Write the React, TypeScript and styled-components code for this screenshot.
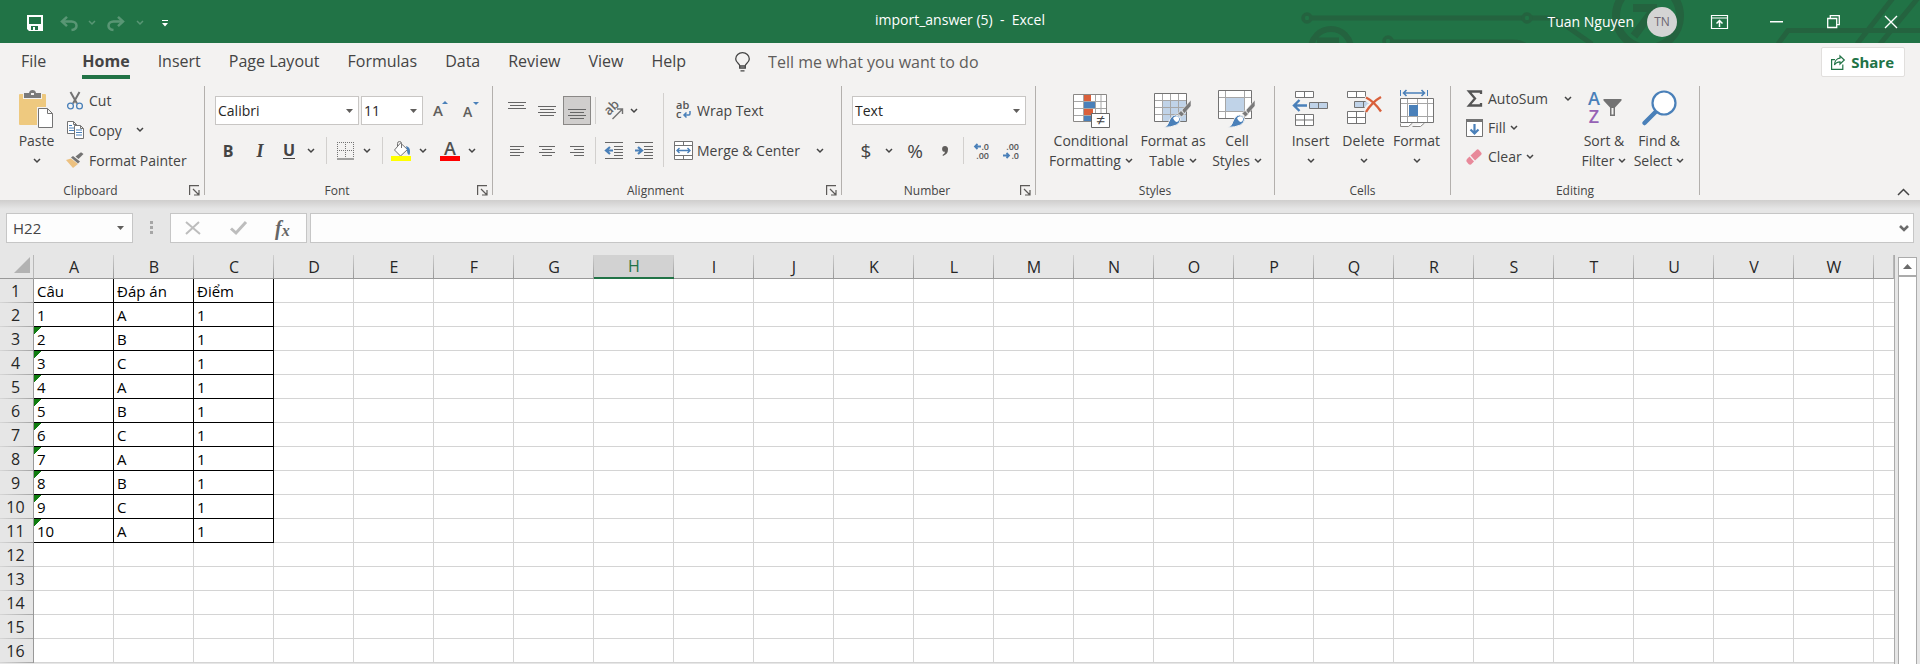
import React from 'react';
import styled, { createGlobalStyle, css } from 'styled-components';

const green = '#217346';
const ink = '#444444';
const grey = '#737373';
const blue = '#4a80b9';
const pale = '#c0d3e8';

const GlobalStyle = createGlobalStyle`
  *, *::before, *::after { box-sizing: border-box; }
  html, body { margin: 0; padding: 0; }
  body, button, input, select { font-family: 'Open Sans', 'Noto Sans', sans-serif; }
  button { margin: 0; padding: 0; border: 0; background: transparent; color: inherit; cursor: pointer; }
  svg { display: block; flex: none; overflow: visible; }
  svg text { font-family: 'Open Sans', 'Noto Sans', sans-serif; }
`;

const Page = styled.div`
  display: flex;
  flex-direction: column;
  height: 100vh;
  overflow: hidden;
  background: #e6e6e6;
  color: ${ink};
  font-size: 14px;
`;

/* ---------- title bar ---------- */

const TitleBar = styled.header`
  position: relative;
  display: grid;
  grid-template-columns: 1fr auto 1fr;
  flex: none;
  height: 43px;
  background: ${green};
  color: #ffffff;
`;

const Circuit = styled.svg`
  position: absolute;
  top: 0;
  right: 0;
  overflow: hidden;
`;

const QuickAccess = styled.div`
  display: flex;
  align-items: center;
  padding: 3px 0 0 20px;
`;

const QuickButton = styled.button<{ $faded?: boolean; $width: number }>`
  display: flex;
  justify-content: center;
  width: ${p => p.$width}px;
  opacity: ${p => (p.$faded ? 0.25 : 1)};
`;

const DocTitle = styled.h1`
  margin: 0;
  font-size: 14px;
  font-weight: 400;
  line-height: 40px;
  white-space: pre;
`;

const Account = styled.div`
  position: relative;
  display: flex;
  justify-content: flex-end;
  align-items: center;
  padding-right: 1px;
`;

const Avatar = styled.span`
  width: 30px;
  height: 30px;
  margin: 0 14px 0 13px;
  border-radius: 50%;
  background: #d4d4d4;
  color: #6b6470;
  font-size: 12px;
  line-height: 30px;
  text-align: center;
`;

const WindowButton = styled.button`
  display: flex;
  align-items: center;
  justify-content: center;
  width: 57px;
  height: 43px;
`;

/* ---------- tabs ---------- */

const TabBar = styled.nav`
  display: flex;
  align-items: center;
  flex: none;
  height: 41px;
  padding: 0 15px 3px 21px;
  background: #f3f2f1;
  font-size: 16px;
`;

const TabList = styled.div`
  display: flex;
  gap: 28px;
`;

const Tab = styled.button<{ $active?: boolean }>`
  height: 34px;
  padding-top: 2px;
  border-bottom: 4px solid ${p => (p.$active ? green : 'transparent')};
  font-size: 16px;
  font-weight: ${p => (p.$active ? 700 : 400)};
  &:first-child { margin-right: 8px; }
`;

const TellMe = styled.label`
  display: flex;
  align-items: center;
  flex: 1;
  gap: 18px;
  margin-left: 49px;
`;

const TellInput = styled.input`
  width: 260px;
  padding: 0;
  border: 0;
  background: transparent;
  font-size: 16px;
  &::placeholder { color: #5f5d5b; opacity: 1; }
`;

const ShareButton = styled.button`
  display: flex;
  align-items: center;
  gap: 6px;
  height: 30px;
  padding: 0 10px 0 9px;
  border: 1px solid #e1dfdd;
  border-radius: 2px;
  background: #ffffff;
  color: ${green};
  font-size: 15px;
  font-weight: 700;
`;

/* ---------- ribbon ---------- */

const Ribbon = styled.div`
  display: flex;
  flex: none;
  height: 116px;
  background: #f3f2f1;
`;

const Group = styled.section<{ $width: number }>`
  display: flex;
  flex-direction: column;
  flex: none;
  width: ${p => p.$width}px;
`;

const GroupRule = styled.span`
  flex: none;
  width: 1px;
  height: 109px;
  margin-top: 2px;
  background: #b3b0ad;
`;

const GroupBody = styled.div<{ $pad?: number }>`
  display: flex;
  flex: 1;
  align-items: flex-start;
  gap: 2px;
  padding-left: ${p => p.$pad ?? 10}px;
`;

const GroupFoot = styled.footer`
  display: flex;
  align-items: center;
  height: 20px;
  font-size: 12px;
`;

const GroupName = styled.span`
  flex: 1;
  text-align: center;
`;

const Launcher = styled.button`
  width: 23px;
  padding-left: 8px;
`;

const BigButton = styled.button<{ $width: number }>`
  display: flex;
  flex-direction: column;
  align-items: center;
  flex: none;
  width: ${p => p.$width}px;
  padding-top: 6px;
  font-size: 14px;
  line-height: 20px;
  white-space: nowrap;
  & > svg { margin-bottom: 3px; }
`;

const CaptionLine = styled.span`
  display: flex;
  align-items: center;
  justify-content: center;
  gap: 4px;
  min-height: 20px;
`;

const Stack = styled.div<{ $top?: number; $gap?: number; $left?: number; $width?: number }>`
  display: flex;
  flex-direction: column;
  flex: none;
  align-items: flex-start;
  gap: ${p => p.$gap ?? 0}px;
  padding: ${p => p.$top ?? 0}px 0 0 ${p => p.$left ?? 0}px;
  ${p => p.$width && css`width: ${p.$width}px;`}
`;

const Row = styled.div<{ $gap?: number; $height: number }>`
  display: flex;
  align-items: center;
  gap: ${p => p.$gap ?? 0}px;
  height: ${p => p.$height}px;
`;

const RowButton = styled.button<{ $height: number; $slot: number; $gap: number; $chevronGap?: number }>`
  display: flex;
  align-items: center;
  height: ${p => p.$height}px;
  font-size: 14px;
  white-space: nowrap;
  & > span:first-child {
    display: flex;
    justify-content: center;
    width: ${p => p.$slot}px;
    margin-right: ${p => p.$gap}px;
  }
  & > svg { margin-left: ${p => p.$chevronGap ?? 4}px; }
`;

const Tool = styled.button<{ $width: number; $left?: number; $pressed?: boolean }>`
  display: flex;
  align-items: center;
  justify-content: center;
  flex: none;
  width: ${p => p.$width}px;
  height: 29px;
  margin-left: ${p => p.$left ?? 0}px;
  ${p => p.$pressed && css`
    border: 1px solid #8a8886;
    background: #d0cecd;
  `}
`;

const Glyph = styled.span<{ $style: 'bold' | 'italic' | 'underline' | 'plain' }>`
  font-size: ${p => (p.$style === 'plain' ? 19 : 16)}px;
  font-weight: ${p => (p.$style === 'plain' ? 400 : 700)};
  line-height: 20px;
  ${p => p.$style === 'italic' && css`font-family: 'Liberation Serif', serif; font-style: italic; font-size: 18px;`}
  ${p => p.$style === 'underline' && css`line-height: 16px; border-bottom: 1px solid ${ink};`}
`;

const ToolRule = styled.span<{ $height?: number; $left: number; $top?: number }>`
  flex: none;
  width: 1px;
  height: ${p => p.$height ?? 27}px;
  margin: ${p => p.$top ?? 0}px 0 0 ${p => p.$left}px;
  background: #d2d0ce;
`;

const SelectBox = styled.div<{ $width: number }>`
  display: grid;
  align-items: center;
  width: ${p => p.$width}px;
  height: 29px;
  border: 1px solid #c8c6c4;
  background: #ffffff;
  & > * { grid-area: 1 / 1; }
  & > svg { justify-self: end; margin-right: 5px; pointer-events: none; }
`;

const Select = styled.select`
  width: 100%;
  height: 27px;
  padding: 0 16px 0 2px;
  border: 0;
  appearance: none;
  background: transparent;
  color: #262626;
  font-size: 14px;
`;

const CollapseButton = styled.button`
  align-self: flex-end;
  margin: 0 10px 4px auto;
`;

/* ---------- formula bar ---------- */

const FormulaBar = styled.div`
  display: flex;
  align-items: flex-start;
  flex: none;
  height: 55px;
  padding: 13px 6px 0;
  background: linear-gradient(#cfcecd, #e6e6e6 9px);
`;

const barBox = css`
  display: flex;
  align-items: center;
  height: 30px;
  border: 1px solid #c6c6c6;
  background: #fdfdfd;
`;

const NameBox = styled.div`
  ${barBox}
  width: 127px;
  padding-right: 8px;
`;

const NameInput = styled.input`
  flex: 1;
  min-width: 0;
  padding: 0 0 0 6px;
  border: 0;
  background: transparent;
  color: ${ink};
  font-size: 15px;
`;

const Grip = styled.span`
  display: flex;
  flex-direction: column;
  gap: 2px;
  margin: 8px 17px 0;
  & > i { width: 3px; height: 3px; background: #a6a6a6; }
`;

const EntryButtons = styled.div`
  ${barBox}
  justify-content: space-around;
  width: 137px;
  margin-right: 3px;
  padding-right: 2px;
`;

const FxGlyph = styled.span`
  font-family: 'Liberation Serif', serif;
  font-style: italic;
  font-weight: 700;
  font-size: 20px;
  line-height: 20px;
  color: #666666;
  & > sub { font-size: 16px; line-height: 1; vertical-align: -1px; }
`;

const FormulaBox = styled.div`
  ${barBox}
  flex: 1;
  padding-right: 4px;
`;

/* ---------- sheet ---------- */

const SheetArea = styled.main`
  display: flex;
  flex: 1;
  min-height: 0;
`;

const SheetPane = styled.div`
  flex: 1;
  min-width: 0;
  border-right: 1px solid #ababab;
  overflow: hidden;
`;

const Sheet = styled.table`
  width: 100%;
  table-layout: fixed;
  border-collapse: separate;
  border-spacing: 0;
  color: #000000;
  font-size: 15px;
`;

const Corner = styled.td`
  height: 24px;
  padding: 0 3px 3px 14px;
  border-bottom: 1px solid #999999;
  border-right: 1px solid #b8b8b8;
  & > svg { margin-left: auto; }
`;

const ColumnHead = styled.th<{ $selected?: boolean }>`
  height: 24px;
  padding: 0;
  border-bottom: 1px solid #999999;
  background: linear-gradient(#d0d0d0, #999999) right / 1px 100% no-repeat #e6e6e6;
  color: #262626;
  font-size: 16px;
  font-weight: 400;
  line-height: 22px;
  ${p => p.$selected && css`
    border-bottom: 2px solid ${green};
    background-color: #d2d2d2;
    color: ${green};
    line-height: 21px;
  `}
`;

const RowHead = styled.th`
  height: 24px;
  padding: 0 2px 0 0;
  border-right: 1px solid #999999;
  background: linear-gradient(90deg, #d6d6d6, #a6a6a6) bottom / 100% 1px no-repeat #e6e6e6;
  color: #262626;
  font-size: 16px;
  font-weight: 400;
  line-height: 23px;
`;

const Cell = styled.td<{ $boxed?: boolean; $flagged?: boolean; $last?: boolean }>`
  height: 24px;
  padding: 1px 0 0 3px;
  border-bottom: 1px solid ${p => (p.$boxed ? '#000000' : '#d4d4d4')};
  border-right: 1px solid ${p => (p.$boxed ? '#000000' : '#d4d4d4')};
  background: #ffffff;
  line-height: 22px;
  white-space: nowrap;
  ${p => p.$last && css`border-right: 0;`}
  ${p => p.$flagged && css`
    background: linear-gradient(135deg, #107c10 5px, transparent 5px) 0 0 / 8px 8px no-repeat #ffffff;
  `}
`;

const Scrollbar = styled.div`
  display: flex;
  flex-direction: column;
  flex: none;
  width: 25px;
  padding: 2px 3px 0;
`;

const ScrollUp = styled.button`
  display: flex;
  align-items: center;
  justify-content: center;
  height: 19px;
  border: 1px solid #ababab;
  background: #ffffff;
`;

const ScrollThumb = styled.div`
  flex: 1;
  border: 1px solid #ababab;
  border-bottom: 0;
  background: #ffffff;
`;

/* ---------- icons ---------- */

const Chevron = ({ color = ink }: { color?: string }) => (
  <svg width="8" height="6" viewBox="0 0 8 6" fill="none" stroke={color} strokeWidth="1.5">
    <path d="M1 1l3 3 3-3" />
  </svg>
);

const Caret = () => (
  <svg width="7" height="4" viewBox="0 0 7 4"><path d="M0 0h7L3.5 4z" fill="#605e5c" /></svg>
);

const SaveIcon = () => (
  <svg width="16" height="16" viewBox="0 0 16 16">
    <path d="M0 0h16v16H2l-2-2zM2 2v7h12V2zM4 11v4h2v-3h2v3h3v-4z" fill="#fff" fillRule="evenodd" />
  </svg>
);

const UndoIcon = ({ flip }: { flip?: boolean }) => (
  <svg width="18" height="15" viewBox="0 0 18 15" fill="none" stroke="#fff" strokeWidth="2.5">
    <g transform={flip ? 'matrix(-1 0 0 1 18 0)' : undefined}>
      <path d="M2 5.500h9.500c3 0 5 1.800 5 4.200 0 2.600-2 4-5 4.300" />
      <path d="M7 .8L2 5.500l5 4.600" />
    </g>
  </svg>
);

const CustomizeIcon = () => (
  <svg width="6" height="7" viewBox="0 0 6 7" fill="#fff"><path d="M0 0h6v1H0zM0 3h6L3 6.500z" /></svg>
);

const CircuitArt = () => (
  <Circuit width="625" height="43" viewBox="1295 0 625 43" fill="none" stroke="#24633f" strokeWidth="5" aria-hidden="true">
    <circle cx="1307" cy="18" r="4" strokeWidth="3.5" />
    <path d="M1312 18h210M1532 18h16q8 0 14 5l30 21" />
    <circle cx="1527" cy="18" r="4" strokeWidth="3.5" />
    <circle cx="1331" cy="49" r="20" strokeWidth="6" />
    <path d="M1317 40.500h22" strokeWidth="6" />
    <circle cx="1388" cy="41" r="4" strokeWidth="3.5" />
    <path d="M1393 42h120q8 0 13 4" />
    <circle cx="1648" cy="16" r="32" strokeWidth="8" />
    <path d="M1633 8h24M1655 8l-21 28" strokeWidth="8" />
    <path d="M1778 44l10-13.500h132M1893-2l-36 46M1918-2l-38 46" />
  </Circuit>
);

const RibbonOptionsIcon = () => (
  <svg width="17" height="14" viewBox="0 0 17 14" fill="none" stroke="#fff">
    <path d="M.5.5h16v13H.5zM.5 3h16" strokeWidth="1.2" />
    <path d="M8.500 12V6M5.500 8.500l3-3 3 3" strokeWidth="1.5" />
  </svg>
);

const RestoreIcon = () => (
  <svg width="13" height="13" viewBox="0 0 13 13" fill="none" stroke="#fff" strokeWidth="1.3">
    <path d="M.7 3.500h9v9h-9zM3.300 3.500V.7h9v9H9.700" />
  </svg>
);

const CloseIcon = () => (
  <svg width="12" height="12" viewBox="0 0 12 12" stroke="#fff" strokeWidth="1.4"><path d="M0 0l12 12M12 0L0 12" /></svg>
);

const BulbIcon = () => (
  <svg width="15" height="20" viewBox="0 0 15 20" fill="none" stroke={ink} strokeWidth="1.3">
    <path d="M4.700 16v-2.500c0-1.600-4-3-4-6.600a6.800 6.300 0 0 1 13.600 0c0 3.600-4 5-4 6.600V16zM4.700 14h5.600M5.500 18.800h4" />
  </svg>
);

const ShareIcon = () => (
  <svg width="14" height="15" viewBox="0 0 14 15" fill="none" stroke={green} strokeWidth="1.2">
    <path d="M4 4.600H.6v9.800h11.200V9.500M9 1l4.300 4-4.300 4V6.800C6.500 6.800 4.500 8 3.500 10c0-3.500 2-6.500 5.500-6.800z" />
  </svg>
);

const PasteIcon = () => (
  <svg width="35" height="38" viewBox="0 0 35 38">
    <rect y="4" width="27" height="31" rx="1" fill="#eec97f" />
    <path d="M4 9V4h6V2q0-2 2-2h3q2 0 2 2v2h6v5z" fill="#f3f2f1" />
    <path d="M5 8V3h5q.5-3 3.500-3t3.500 3h5v5zM12 3v2h3V3z" fill="#7a7a7a" fillRule="evenodd" />
    <path d="M19.500 18.500h9l5 5v14h-14z" fill="#fff" stroke="#f3f2f1" strokeWidth="3" />
    <path d="M19.500 18.500h9l5 5v14h-14zM28.500 18.500v5h5" fill="#fff" stroke="#737373" />
  </svg>
);

const CutIcon = () => (
  <svg width="16" height="19" viewBox="0 0 16 19" fill="none">
    <path d="M3.500 1L10 12.500M12.500 1L6 12.500" stroke={grey} strokeWidth="2" />
    <circle cx="3.5" cy="15" r="2.9" stroke={blue} strokeWidth="1.3" />
    <circle cx="12.5" cy="15" r="2.9" stroke={blue} strokeWidth="1.3" />
  </svg>
);

const CopyIcon = () => (
  <svg width="17" height="18" viewBox="0 0 17 18" fill="#fff" stroke={grey}>
    <path d="M.5.5h6l3 3v9h-9zM6.500.5v3h3" />
    <path d="M2 4.500h3M2 7h5M2 9.500h5" stroke={blue} />
    <path d="M7.500 4.500h6l3 3v10h-9zM13.500 4.500v3h3" />
    <path d="M9 9h6M9 11.500h6M9 14h6" stroke={blue} />
  </svg>
);

const PainterIcon = () => (
  <svg width="18" height="16" viewBox="0 0 18 16">
    <path d="M0 8l5-1.500 7 5.500-5 4z" fill="#ecc180" />
    <path d="M5 5.500l2-1.500 7 5.500-2 2z" fill={grey} />
    <path d="M9.500 4.500L15 .3 17.500 2l-5 5z" fill={grey} />
  </svg>
);

const LauncherIcon = () => (
  <svg width="11" height="11" viewBox="0 0 11 11" fill="none" stroke="#5c5a58" strokeWidth="1.2">
    <path d="M.6 10V.6H10M4 4l5.500 5.500M10 5v5H5" />
  </svg>
);

const GrowFont = ({ down }: { down?: boolean }) => (
  <svg width="18" height="19" viewBox="0 0 18 19">
    <text x="1" y={down ? 16 : 15} fontSize={down ? 14 : 15} fontWeight="600" fill="#605e5c">A</text>
    <path d={down ? 'M11 1h6l-3 3z' : 'M10 3h6l-3-3z'} fill={blue} />
  </svg>
);

const BordersIcon = () => (
  <svg width="17" height="18" viewBox="0 0 17 18" fill="none" stroke={grey}>
    <path d="M0 .5h17M0 8.500h17M.5 0v16M8.500 0v16M16.500 0v16" strokeDasharray="1 1" />
    <path d="M0 17h17" strokeWidth="1.3" />
  </svg>
);

const FillColorIcon = () => (
  <svg width="20" height="20" viewBox="0 0 20 20">
    <path d="M9.500 2l7 6.500-7 6.500-6-6z" fill="#fff" stroke={grey} />
    <path d="M6.500 6V2.500q0-2 2-2t2 2V7" fill="none" stroke={grey} />
    <path d="M15 5q4 1 4 5t-1 4q-2-1-2-5z" fill={blue} />
    <path d="M0 15h20v5H0z" fill="#ff0" />
  </svg>
);

const FontColorIcon = () => (
  <svg width="20" height="20" viewBox="0 0 20 20">
    <text x="10" y="14" fontSize="18" fontWeight="600" textAnchor="middle" fill="#505050">A</text>
    <path d="M0 15h20v5H0z" fill="#f00" />
  </svg>
);

const Lines = ({ d, width, height }: { d: string; width: number; height: number }) => (
  <svg width={width} height={height} viewBox={`0 0 ${width} ${height}`} fill="none" stroke="#666"><path d={d} /></svg>
);

const TopAlign = () => <Lines width={18} height={19} d="M0 1.500h18M2 4.500h14M0 7.500h18" />;
const MiddleAlign = () => <Lines width={18} height={12} d="M0 1.500h18M2 4.500h14M0 7.500h18M2 10.500h14" />;
const BottomAlign = () => <Lines width={18} height={12} d="M0 4.500h18M2 7.500h14M0 10.500h18M2 13.500h14" />;
const LeftAlign = () => <Lines width={14} height={12} d="M0 1.500h14M0 4.500h10M0 7.500h14M0 10.500h10" />;
const CenterAlign = () => <Lines width={16} height={12} d="M0 1.500h16M3 4.500h10M0 7.500h16M3 10.500h10" />;
const RightAlign = () => <Lines width={14} height={12} d="M0 1.500h14M4 4.500h10M0 7.500h14M4 10.500h10" />;

const OrientationIcon = () => (
  <svg width="20" height="18" viewBox="0 0 20 18">
    <text transform="translate(5 14) rotate(-45)" fontSize="13" fontWeight="600" fill="#666">ab</text>
    <path d="M8.500 17l9.500-9.500M13 7h5.500v5" fill="none" stroke={grey} strokeWidth="1.4" />
  </svg>
);

const IndentIcon = ({ right }: { right?: boolean }) => (
  <svg width="18" height="17" viewBox="0 0 18 17" fill="none">
    <path d="M0 .5h18M9 4.500h9M9 7.500h9M9 10.500h9M9 13.500h9M0 16.500h18" stroke="#666" />
    <path d={right ? 'M0 8.500h6M3 5l4 3.500-4 3.500' : 'M8 8.500H2M5 5L1 8.500 5 12'} stroke={blue} strokeWidth="2.2" />
  </svg>
);

const WrapIcon = () => (
  <svg width="17" height="19" viewBox="0 0 17 19">
    <text x="1" y="8" fontSize="11" fontWeight="600" fill="#555">ab</text>
    <text x="1" y="17" fontSize="11" fontWeight="600" fill="#555">c</text>
    <path d="M15 10v2.500q0 1.500-1 1.500H9M11.500 11.500L9 14l2.500 2.500" fill="none" stroke={blue} strokeWidth="1.5" />
  </svg>
);

const MergeIcon = () => (
  <svg width="19" height="19" viewBox="0 0 19 19" fill="#fff" stroke={grey}>
    <path d="M.5.500h18v18H.5zM.5 4.500h18M.5 14.500h18M9.500.5v4M9.500 14.500v4" />
    <path d="M3 9.500h13M5.500 7L3 9.500 5.500 12M13.500 7l2.500 2.500-2.500 2.500" fill="none" stroke={blue} strokeWidth="1.4" />
  </svg>
);

const DecimalIcon = ({ less }: { less?: boolean }) => (
  <svg width="17" height="18" viewBox="0 0 17 18">
    <text x="16" y="8" fontSize="9" fontWeight="600" textAnchor="end" fill="#555">{less ? '.00' : '.0'}</text>
    <text x="16" y="17" fontSize="9" fontWeight="600" textAnchor="end" fill="#555">{less ? '.0' : '.00'}</text>
    <path
      d={less ? 'M0 13.500h6M3.500 11L6 13.500 3.500 16' : 'M8 4.500H2M4.500 2L2 4.500 4.500 7'}
      fill="none"
      stroke={blue}
      strokeWidth="1.8"
    />
  </svg>
);

const ConditionalIcon = () => (
  <svg width="37" height="38" viewBox="0 0 37 38">
    <path d="M.5 4.500h33v27H.5z" fill="#fff" stroke="#8a8886" />
    <path d="M10.500 5v26M22.500 5v26M28 5v26M1 11.500h32M1 18.500h32M1 25.500h32" stroke="#a6a6a6" />
    <path d="M11 5h7v6h-7zM11 19h9v6h-9z" fill="#d9603b" />
    <path d="M11 12h11v6H11zM11 26h7v5h-7z" fill={blue} />
    <path d="M18.500 23.500h18v14h-18z" fill="#fff" stroke="#666" />
    <text x="27.5" y="36" fontSize="16" textAnchor="middle" fill="#444">≠</text>
  </svg>
);

const Brush = () => (
  <g>
    <path d="M28 20l9-10v6l-7 8z" fill="#7a7a7a" stroke="#f3f2f1" strokeWidth=".6" />
    <path d="M24 23.500l3-3 3.500 3.500-3 3z" fill="#7a7a7a" stroke="#f3f2f1" strokeWidth=".8" />
    <path d="M9 37.500q5-1 6-6 2-6 6.500-6.500 4 0 5 4 0 8-17.500 8.500z" fill={blue} stroke="#f3f2f1" />
    <path d="M19 28q2-2.500 5-1.500 2 2 .5 4.500-1.500 1.500-3 .5t-2.500-3.500z" fill="#fff" />
  </g>
);

const TableFormatIcon = () => (
  <svg width="38" height="38" viewBox="0 0 38 38">
    <path d="M.5 3.500h32v28H.5z" fill="#fff" />
    <path d="M9 11h23v20H9z" fill={pale} />
    <path d="M8.500 4v27M16.500 4v27M24.500 4v27M1 10.500h31M1 17.500h31M1 24.500h31" stroke="#a6a6a6" />
    <path d="M.5 3.500h32v28H.5z" fill="none" stroke={grey} />
    <Brush />
  </svg>
);

const CellStylesIcon = () => (
  <svg width="38" height="38" viewBox="0 0 38 38">
    <path d="M.5.500h33v28H.5z" fill="#fff" />
    <path d="M8 8h18v13H8z" fill={pale} />
    <path d="M7.500 1v27M26.500 1v27M1 7.500h32M1 21.500h32" stroke="#a6a6a6" />
    <path d="M.5.500h33v28H.5z" fill="none" stroke={grey} />
    <Brush />
  </svg>
);

const InsertIcon = () => (
  <svg width="37" height="38" viewBox="0 0 37 38" fill="#fff" stroke={grey}>
    <path d="M3.500 1.500h18v6h-18zM12.500 1.500v6M3.500 24.500h18v11h-18zM12.500 24.500v11M3.500 30h18" />
    <path d="M17.500 12.500h18v6h-18zM26.500 12.500v6" fill={pale} />
    <path d="M15 15.500H2M7.500 10L2 15.500 7.500 21" fill="none" stroke={blue} strokeWidth="2.4" />
  </svg>
);

const DeleteIcon = () => (
  <svg width="37" height="38" viewBox="0 0 37 38" fill="#fff" stroke={grey}>
    <path d="M2.500 1.500h18v6h-18zM11.500 1.500v6M2.500 21.500h18v12h-18zM11.500 21.500v12M2.500 27.500h18" />
    <path d="M9.500 11.500h14v6h-14zM18.500 11.500v6" fill={pale} />
    <path d="M20 7.500q8 4 16 14M35 8q-9 5-15 14" fill="none" stroke="#f3f2f1" strokeWidth="6" />
    <path d="M21 7.500q8 4 15 14M36 7q-9 5-15 15" fill="none" stroke="#d9603b" strokeWidth="2.4" />
  </svg>
);

const FormatIcon = () => (
  <svg width="35" height="38" viewBox="0 0 35 38" fill="#fff" stroke={grey}>
    <path d="M1.500 33.500v3h8l4-3.500M13.500 36.500h8l4-3.500" stroke="#8a8886" />
    <path d="M1.500 8.500h33v24h-33z" />
    <path d="M8.500 9v23M18.500 9v23M28.500 9v23M2 13.500h32M2 26.500h32" stroke="#a6a6a6" />
    <path d="M10 15h9v11h-9z" fill={blue} stroke="none" />
    <path d="M1.500 0v6M28.500 0v6" stroke={blue} />
    <path d="M4 3h22M7.500 0l-3 3 3 3M22.500 0l3 3-3 3" fill="none" stroke={blue} strokeWidth="1.6" />
  </svg>
);

const SigmaIcon = () => (
  <svg width="15" height="17" viewBox="0 0 15 17">
    <path d="M14 4V1.500H2l6 7-6 7h12V13" fill="none" stroke="#555" strokeWidth="2.3" />
  </svg>
);

const FillIcon = () => (
  <svg width="17" height="18" viewBox="0 0 17 18" fill="none">
    <path d="M.5 2.500h16v15H.5z" fill="#fff" stroke={grey} />
    <path d="M0 0h17v3H0z" fill={grey} />
    <path d="M8.500 5v9M4.500 10.500l4 4 4-4" stroke={blue} strokeWidth="2.2" />
  </svg>
);

const ClearIcon = () => (
  <svg width="16" height="16" viewBox="0 0 16 16" fill="#e8899a">
    <path d="M4.500 6.500L11 .5q1-.5 2 .5l2.500 3q.5 1-.5 2L9 11.500z" />
    <path d="M3.500 7.500L8 12.500 5 15.500q-1.500.5-2.500-.5L.5 12.500q-.5-1.500.5-2.500z" />
  </svg>
);

const SortIcon = () => (
  <svg width="35" height="38" viewBox="0 0 35 38">
    <text x="7" y="15" fontSize="18" fontWeight="600" textAnchor="middle" fill={blue}>A</text>
    <text x="7" y="33" fontSize="18" fontWeight="600" textAnchor="middle" fill="#9662b5">Z</text>
    <path d="M16.500 9h18v1.500l-6.500 7V26h-5v-8.500l-6.500-7zM24.500 18v6.500h2V18z" fill={grey} fillRule="evenodd" />
  </svg>
);

const FindIcon = () => (
  <svg width="35" height="38" viewBox="0 0 35 38">
    <path d="M14 21.500L2.500 33" stroke={blue} strokeWidth="4.5" strokeLinecap="round" />
    <circle cx="22" cy="13" r="11.5" fill="#fff" stroke={blue} strokeWidth="2.2" />
  </svg>
);

/* ---------- composed parts ---------- */

interface BigProps {
  icon: React.ReactNode;
  width: number;
  lines: [string, string?];
}

const Big = ({ icon, width, lines: [first, second] }: BigProps) => (
  <BigButton type="button" $width={width}>
    {icon}
    <span>{first}</span>
    <CaptionLine>
      {second}
      <Chevron />
    </CaptionLine>
  </BigButton>
);

interface RibbonGroupProps {
  name: string;
  width: number;
  pad?: number;
  launcher?: boolean;
  children: React.ReactNode;
}

const RibbonGroup = ({ name, width, pad, launcher, children }: RibbonGroupProps) => (
  <>
    <Group $width={width} aria-label={name}>
      <GroupBody $pad={pad}>{children}</GroupBody>
      <GroupFoot>
        <GroupName>{name}</GroupName>
        {launcher && (
          <Launcher type="button" aria-label={`${name} settings`}>
            <LauncherIcon />
          </Launcher>
        )}
      </GroupFoot>
    </Group>
    <GroupRule />
  </>
);

const Dropdown = ({ label, value, width }: { label: string; value: string; width: number }) => (
  <SelectBox $width={width}>
    <Select aria-label={label} defaultValue={value}>
      <option>{value}</option>
    </Select>
    <Caret />
  </SelectBox>
);

const Menu = ({ label, width = 18 }: { label: string; width?: number }) => (
  <Tool type="button" $width={width} aria-label={label}>
    <Chevron />
  </Tool>
);

/* ---------- data ---------- */

const tabs = ['File', 'Home', 'Insert', 'Page Layout', 'Formulas', 'Data', 'Review', 'View', 'Help'];
const columns = 'ABCDEFGHIJKLMNOPQRSTUVW'.split('');
const answers = ['A', 'B', 'C', 'A', 'B', 'C', 'A', 'B', 'C', 'A'];
const records: string[][] = [
  ['Câu', 'Đáp án', 'Điểm'],
  ...answers.map((answer, i) => [String(i + 1), answer, '1']),
];
const rowCount = 16;

export default function App() {
  return (
    <Page>
      <GlobalStyle />
      <TitleBar>
        <CircuitArt />
        <QuickAccess>
          <QuickButton type="button" $width={30} aria-label="Save"><SaveIcon /></QuickButton>
          <QuickButton type="button" $width={38} $faded aria-label="Undo"><UndoIcon /></QuickButton>
          <QuickButton type="button" $width={8} $faded aria-label="Undo list"><Chevron color="#fff" /></QuickButton>
          <QuickButton type="button" $width={40} $faded aria-label="Redo"><UndoIcon flip /></QuickButton>
          <QuickButton type="button" $width={8} $faded aria-label="Redo list"><Chevron color="#fff" /></QuickButton>
          <QuickButton type="button" $width={42} aria-label="Customize toolbar"><CustomizeIcon /></QuickButton>
        </QuickAccess>
        <DocTitle>import_answer (5)  -  Excel</DocTitle>
        <Account>
          <span>Tuan Nguyen</span>
          <Avatar>TN</Avatar>
          <WindowButton type="button" aria-label="Ribbon display options"><RibbonOptionsIcon /></WindowButton>
          <WindowButton type="button" aria-label="Minimize">
            <svg width="13" height="2" viewBox="0 0 13 2"><path d="M0 0h13v1.500H0z" fill="#fff" /></svg>
          </WindowButton>
          <WindowButton type="button" aria-label="Restore"><RestoreIcon /></WindowButton>
          <WindowButton type="button" aria-label="Close"><CloseIcon /></WindowButton>
        </Account>
      </TitleBar>

      <TabBar>
        <TabList>
          {tabs.map(tab => (
            <Tab type="button" key={tab} $active={tab === 'Home'}>{tab}</Tab>
          ))}
        </TabList>
        <TellMe>
          <BulbIcon />
          <TellInput aria-label="Tell me" placeholder="Tell me what you want to do" />
        </TellMe>
        <ShareButton type="button"><ShareIcon />Share</ShareButton>
      </TabBar>

      <Ribbon>
        <RibbonGroup name="Clipboard" width={204} launcher>
          <Big icon={<PasteIcon />} width={53} lines={['Paste']} />
          <Stack $top={1}>
            <RowButton type="button" $height={30} $slot={20} $gap={4}><span><CutIcon /></span>Cut</RowButton>
            <RowButton type="button" $height={30} $slot={20} $gap={4} $chevronGap={14}>
              <span><CopyIcon /></span>Copy<Chevron />
            </RowButton>
            <RowButton type="button" $height={30} $slot={20} $gap={4}><span><PainterIcon /></span>Format Painter</RowButton>
          </Stack>
        </RibbonGroup>

        <RibbonGroup name="Font" width={287} pad={7} launcher>
          <Stack $top={12} $gap={12}>
            <Row $height={29} $gap={2}>
              <Stack $left={3}><Dropdown label="Font" value="Calibri" width={144} /></Stack>
              <Dropdown label="Font size" value="11" width={62} />
              <Tool type="button" $width={28} $left={2} aria-label="Increase font size"><GrowFont /></Tool>
              <Tool type="button" $width={28} aria-label="Decrease font size"><GrowFont down /></Tool>
            </Row>
            <Row $height={27}>
              <Tool type="button" $width={32}><Glyph $style="bold">B</Glyph></Tool>
              <Tool type="button" $width={32}><Glyph $style="italic">I</Glyph></Tool>
              <Tool type="button" $width={26}><Glyph $style="underline">U</Glyph></Tool>
              <Menu label="Underline styles" />
              <ToolRule $left={6} />
              <Tool type="button" $width={26} $left={5} aria-label="Borders"><BordersIcon /></Tool>
              <Menu label="Border styles" />
              <ToolRule $left={6} />
              <Tool type="button" $width={26} $left={5} aria-label="Fill color"><FillColorIcon /></Tool>
              <Menu label="Fill colors" />
              <Tool type="button" $width={26} $left={5} aria-label="Font color"><FontColorIcon /></Tool>
              <Menu label="Font colors" />
            </Row>
          </Stack>
        </RibbonGroup>

        <RibbonGroup name="Alignment" width={348} launcher>
          <Stack $top={12} $gap={12} $width={158}>
            <Row $height={29} $gap={2}>
              <Tool type="button" $width={28} aria-label="Top align"><TopAlign /></Tool>
              <Tool type="button" $width={28} aria-label="Middle align"><MiddleAlign /></Tool>
              <Tool type="button" $width={28} $pressed aria-label="Bottom align"><BottomAlign /></Tool>
              <ToolRule $left={2} />
              <Tool type="button" $width={28} $left={2} aria-label="Orientation"><OrientationIcon /></Tool>
              <Menu label="Orientation list" width={8} />
            </Row>
            <Row $height={27} $gap={2}>
              <Tool type="button" $width={28} aria-label="Align left"><LeftAlign /></Tool>
              <Tool type="button" $width={28} aria-label="Center"><CenterAlign /></Tool>
              <Tool type="button" $width={28} aria-label="Align right"><RightAlign /></Tool>
              <ToolRule $left={2} />
              <Tool type="button" $width={28} $left={2} aria-label="Decrease indent"><IndentIcon /></Tool>
              <Tool type="button" $width={28} aria-label="Increase indent"><IndentIcon right /></Tool>
            </Row>
          </Stack>
          <ToolRule $left={0} $top={9} $height={74} />
          <Stack $top={12} $gap={12} $left={7}>
            <RowButton type="button" $height={29} $slot={20} $gap={4}><span><WrapIcon /></span>Wrap Text</RowButton>
            <RowButton type="button" $height={27} $slot={20} $gap={4} $chevronGap={16}>
              <span><MergeIcon /></span>{'Merge & Center'}<Chevron />
            </RowButton>
          </Stack>
        </RibbonGroup>

        <RibbonGroup name="Number" width={193} launcher>
          <Stack $top={12} $gap={12}>
            <Dropdown label="Number format" value="Text" width={174} />
            <Row $height={27}>
              <Tool type="button" $width={28}><Glyph $style="plain">$</Glyph></Tool>
              <Menu label="Currency list" />
              <Tool type="button" $width={34}><Glyph $style="plain">%</Glyph></Tool>
              <Tool type="button" $width={26} aria-label="Comma style">
                <svg width="7" height="10" viewBox="0 0 7 10"><path d="M3 0a3 3 0 0 1 3 3.500Q6 8 1 10l-.5-1Q3 7.500 3 5.800A2.900 2.900 0 0 1 3 0z" fill="#605e5c" /></svg>
              </Tool>
              <ToolRule $left={5} />
              <Tool type="button" $width={30} $left={2} aria-label="Increase decimal"><DecimalIcon /></Tool>
              <Tool type="button" $width={30} aria-label="Decrease decimal"><DecimalIcon less /></Tool>
            </Row>
          </Stack>
        </RibbonGroup>

        <RibbonGroup name="Styles" width={238}>
          <Big icon={<ConditionalIcon />} width={90} lines={['Conditional', 'Formatting']} />
          <Big icon={<TableFormatIcon />} width={70} lines={['Format as', 'Table']} />
          <Big icon={<CellStylesIcon />} width={54} lines={['Cell', 'Styles']} />
        </RibbonGroup>

        <RibbonGroup name="Cells" width={175}>
          <Big icon={<InsertIcon />} width={51} lines={['Insert']} />
          <Big icon={<DeleteIcon />} width={51} lines={['Delete']} />
          <Big icon={<FormatIcon />} width={51} lines={['Format']} />
        </RibbonGroup>

        <RibbonGroup name="Editing" width={248} pad={14}>
          <Stack $width={112}>
            <RowButton type="button" $height={29} $slot={18} $gap={5} $chevronGap={16}>
              <span><SigmaIcon /></span>AutoSum<Chevron />
            </RowButton>
            <RowButton type="button" $height={29} $slot={18} $gap={5}><span><FillIcon /></span>Fill<Chevron /></RowButton>
            <RowButton type="button" $height={29} $slot={18} $gap={5}><span><ClearIcon /></span>Clear<Chevron /></RowButton>
          </Stack>
          <Big icon={<SortIcon />} width={50} lines={['Sort &', 'Filter']} />
          <Big icon={<FindIcon />} width={56} lines={['Find &', 'Select']} />
        </RibbonGroup>

        <CollapseButton type="button" aria-label="Collapse ribbon">
          <svg width="13" height="8" viewBox="0 0 13 8" fill="none" stroke={ink} strokeWidth="1.5"><path d="M1 7l5.500-5.500L12 7" /></svg>
        </CollapseButton>
      </Ribbon>

      <FormulaBar>
        <NameBox>
          <NameInput aria-label="Name box" defaultValue="H22" />
          <Caret />
        </NameBox>
        <Grip><i /><i /><i /></Grip>
        <EntryButtons>
          <button type="button" aria-label="Cancel">
            <svg width="16" height="14" viewBox="0 0 16 14" stroke="#bdbdbd" strokeWidth="2"><path d="M1 1l14 12M14 1L1 13" /></svg>
          </button>
          <button type="button" aria-label="Enter">
            <svg width="17" height="14" viewBox="0 0 17 14" fill="none" stroke="#bdbdbd" strokeWidth="3"><path d="M1 7.500l5 4.500L16 1" /></svg>
          </button>
          <button type="button" aria-label="Insert function"><FxGlyph>f<sub>x</sub></FxGlyph></button>
        </EntryButtons>
        <FormulaBox>
          <NameInput aria-label="Formula" />
          <svg width="10" height="7" viewBox="0 0 10 7" fill="none" stroke="#6b6b6b" strokeWidth="2.6"><path d="M1 1l4 4 4-4" /></svg>
        </FormulaBox>
      </FormulaBar>

      <SheetArea>
        <SheetPane>
          <Sheet>
            <colgroup>
              <col width="34" />
              {columns.map(c => <col key={c} width="80" />)}
              <col />
            </colgroup>
            <thead>
              <tr>
                <Corner>
                  <svg width="16" height="16" viewBox="0 0 16 16"><path d="M16 0v16H0z" fill="#b2b2b2" /></svg>
                </Corner>
                {columns.map(c => (
                  <ColumnHead scope="col" key={c} $selected={c === 'H'}>{c}</ColumnHead>
                ))}
                <Corner />
              </tr>
            </thead>
            <tbody>
              {Array.from({ length: rowCount }, (_, r) => (
                <tr key={r}>
                  <RowHead scope="row">{r + 1}</RowHead>
                  {columns.map((c, i) => {
                    const value = records[r]?.[i];
                    return (
                      <Cell key={c} $boxed={value !== undefined} $flagged={i === 0 && r > 1 && value !== undefined}>
                        {value}
                      </Cell>
                    );
                  })}
                  <Cell $last />
                </tr>
              ))}
            </tbody>
          </Sheet>
        </SheetPane>
        <Scrollbar>
          <ScrollUp type="button" aria-label="Scroll up">
            <svg width="9" height="5" viewBox="0 0 9 5"><path d="M0 5h9L4.500 0z" fill="#6b6b6b" /></svg>
          </ScrollUp>
          <ScrollThumb />
        </Scrollbar>
      </SheetArea>
    </Page>
  );
}
